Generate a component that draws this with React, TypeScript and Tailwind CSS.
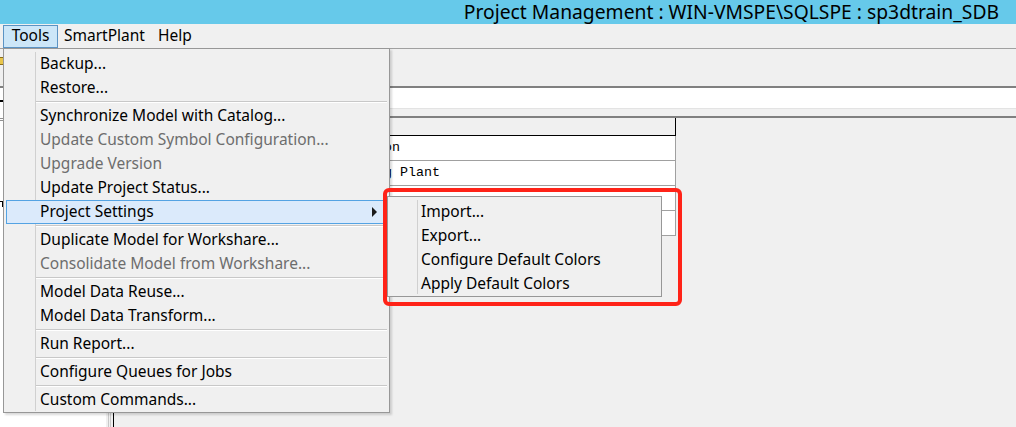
import React from "react";

type Entry =
  | { kind: "item"; label: string; disabled?: boolean; active?: boolean; submenu?: boolean }
  | { kind: "sep" };

const toolsMenu: Entry[] = [
  { kind: "item", label: "Backup..." },
  { kind: "item", label: "Restore..." },
  { kind: "sep" },
  { kind: "item", label: "Synchronize Model with Catalog..." },
  { kind: "item", label: "Update Custom Symbol Configuration...", disabled: true },
  { kind: "item", label: "Upgrade Version", disabled: true },
  { kind: "item", label: "Update Project Status..." },
  { kind: "item", label: "Project Settings", active: true, submenu: true },
  { kind: "sep" },
  { kind: "item", label: "Duplicate Model for Workshare..." },
  { kind: "item", label: "Consolidate Model from Workshare...", disabled: true },
  { kind: "sep" },
  { kind: "item", label: "Model Data Reuse..." },
  { kind: "item", label: "Model Data Transform..." },
  { kind: "sep" },
  { kind: "item", label: "Run Report..." },
  { kind: "sep" },
  { kind: "item", label: "Configure Queues for Jobs" },
  { kind: "sep" },
  { kind: "item", label: "Custom Commands..." },
];

const settingsMenu = ["Import...", "Export...", "Configure Default Colors", "Apply Default Colors"];

const uiFont = { fontFamily: '"Noto Sans", "Open Sans", sans-serif' };
const monoFont = { fontFamily: '"Liberation Mono", "DejaVu Sans Mono", monospace' };

function MenuRow({ e }: { e: Entry }) {
  if (e.kind === "sep") {
    return (
      <div className="h-[4px] ml-[30px] pt-[1px]">
        <div className="h-px bg-[#c8c8c8]" />
        <div className="h-px bg-white" />
      </div>
    );
  }
  return (
    <div
      className={
        "relative h-6 flex items-center pl-[33px] pb-[1px] text-[15.5px] leading-none border " +
        (e.active ? "bg-[#dbeafb] border-[#54a3e3]" : "border-transparent") +
        (e.disabled ? " text-[#6d6d6d]" : " text-black")
      }
    >
      <span>{e.label}</span>
      {e.submenu && (
        <svg className="absolute right-[9px] top-[6px]" width="5" height="10" viewBox="0 0 5 10">
          <path d="M0 0 L5 5 L0 10 Z" fill="#1a1a1a" />
        </svg>
      )}
    </div>
  );
}

export default function App() {
  return (
    <div className="relative w-[1016px] h-[427px] overflow-hidden bg-[#f0f0f0] flex flex-col" style={uiFont}>
      {/* title bar */}
      <div className="h-6 bg-[#66c9ea] flex items-center justify-end pr-[17px]">
        <span className="text-[19.3px] leading-[20px] text-black whitespace-nowrap">
          Project Management : WIN-VMSPE\SQLSPE : sp3dtrain_SDB
        </span>
      </div>

      {/* menu bar */}
      <div className="h-6 flex items-center pl-[3px] text-[15.5px] leading-none text-black">
        <div className="h-[23px] w-[55px] flex items-center justify-center pb-[1px] bg-[#cce6f8] border border-[#5b93c4]">
          Tools
        </div>
        <div className="ml-[6px] pb-[1px]">SmartPlant</div>
        <div className="ml-[13px] pb-[1px]">Help</div>
      </div>

      {/* toolbar strip */}
      <div className="h-[38px] border-t border-[#a0a0a0] flex items-start pt-[8px]">
        <div className="w-[8px] h-[8px] ml-[-3px] bg-[#e8c54a] border border-[#8a6d1a]" />
      </div>
      <div className="h-[2px] bg-[#808080]" />

      {/* panes */}
      <div className="flex-1 flex">
        <div className="w-[106px] bg-white flex flex-col">
          <div className="h-[12px]" />
          <div className="w-[3px] h-[2px] bg-black" />
          <div className="h-[16px]" />
          <div className="h-[3px] border-y border-[#909090]" />
          <div className="h-[80px]" />
          <div className="w-[3px] h-[6px] border-t border-r border-black" />
        </div>
        <div className="w-[7px] flex justify-center gap-[1px]">
          <div className="w-px bg-[#c8c8c8]" />
          <div className="w-px bg-[#c8c8c8]" />
        </div>
        <div className="flex-1 border-l border-black flex flex-col">
          <div className="h-[20px] bg-white" />
          <div className="h-px bg-[#e3e3e3]" />
          <div className="h-[7px]" />
          <div className="h-[2px] bg-[#808080]" />
          {/* list */}
          <div className="w-[562px] flex flex-col">
            <div className="h-[18px] flex border-b border-black">
              <div className="w-[210px] border-r border-[#a0a0a0]" />
              <div className="flex-1 border-r border-black" />
            </div>
            {["Operation", "Training Plant", "", ""].map((t, i) => (
              <div key={i} className="h-[25px] flex bg-white border-b border-[#a0a0a0]">
                <div className="w-[210px]" />
                <div
                  className="flex-1 border-r border-[#a0a0a0] pl-[4px] flex items-center text-[13.33px] text-black"
                  style={monoFont}
                >
                  {t}
                </div>
              </div>
            ))}
          </div>
        </div>
      </div>

      {/* Tools drop-down */}
      <div className="absolute left-[3px] top-[48px] w-[387px] bg-[#f0f0f0] border border-[#979797] px-[2px] pt-[3px] shadow-[2px_2px_2px_rgba(0,0,0,0.15)]">
        <div className="absolute left-[31px] top-[3px] bottom-[1px] w-px bg-[#d0d0d0]" />
        {toolsMenu.map((e, i) => (
          <MenuRow key={i} e={e} />
        ))}
      </div>

      {/* Project Settings sub-menu */}
      <div className="absolute left-[387px] top-[196px] w-[275px] bg-[#f0f0f0] border border-[#979797] px-[2px] pt-[3px] pb-0">
        <div className="absolute left-[29px] top-[3px] bottom-[2px] w-px bg-[#d0d0d0]" />
        {settingsMenu.map((s) => (
          <div key={s} className="h-6 flex items-center pl-[31px] pb-[1px] text-[15.5px] leading-none text-black">
            {s}
          </div>
        ))}
      </div>

      {/* callout frame */}
      <div className="absolute left-[383px] top-[188px] w-[299px] h-[118px] border-[4px] border-[#ff2318] rounded-[6px]" />
    </div>
  );
}
